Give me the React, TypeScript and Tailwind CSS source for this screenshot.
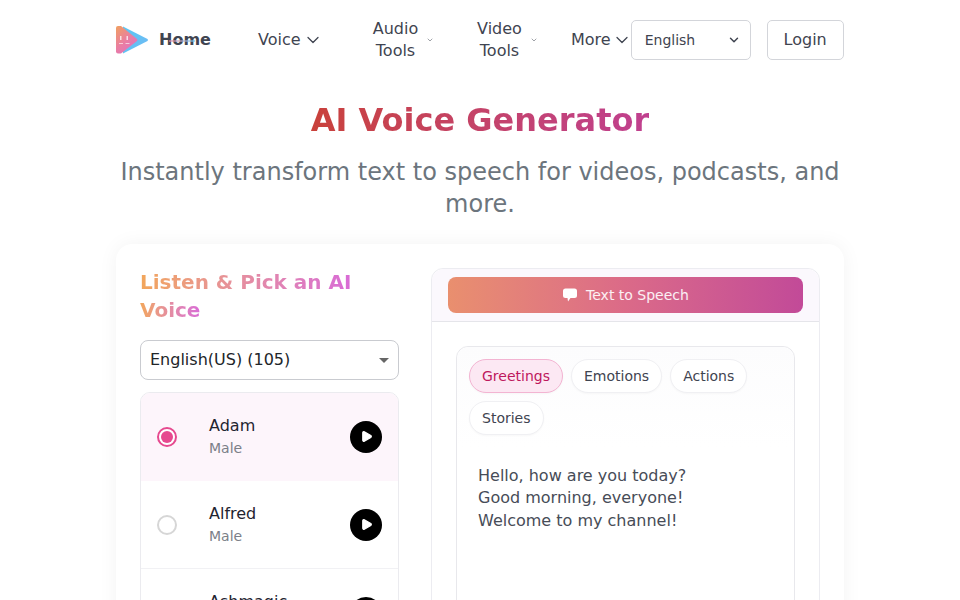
import React from 'react';
import { ChevronDown, Play } from 'lucide-react';

const voices = [
  { name: 'Adam', gender: 'Male', active: true },
  { name: 'Alfred', gender: 'Male', active: false },
  { name: 'Ashmagic', gender: 'Male', active: false },
];

const Logo = () => (
  <svg width="33" height="30" viewBox="0 0 33 30">
    <defs>
      <linearGradient id="logoFront" x1="0" y1="0" x2="0.7" y2="1">
        <stop offset="0" stopColor="#f0a060" />
        <stop offset="0.55" stopColor="#ea7fa0" />
        <stop offset="1" stopColor="#e070c0" />
      </linearGradient>
      <linearGradient id="logoBack" x1="0" y1="0" x2="1" y2="0.6">
        <stop offset="0" stopColor="#58c8f4" />
        <stop offset="1" stopColor="#6cbcf4" />
      </linearGradient>
    </defs>
    <path d="M7 1.500 L31.500 14 Q32.500 15 31.500 16 L7 28.500 Z" fill="url(#logoBack)" />
    <path d="M0 3 Q0 1 2 1 L5 1 L21 14 Q22 15 21 16 L5 28.500 L2 28.500 Q0 28.500 0 26.500 Z" fill="url(#logoFront)" />
    <rect x="4" y="11" width="1.500" height="4" fill="#fff" opacity="0.75" />
    <rect x="10.500" y="11" width="1.500" height="4" fill="#fff" opacity="0.75" />
    <rect x="3" y="18" width="4" height="1" fill="#fff" opacity="0.6" />
    <rect x="9.500" y="18" width="4" height="1" fill="#fff" opacity="0.6" />
  </svg>
);

const Nav = () => (
  <nav className="flex h-20 items-center">
    <a className="flex w-[142px] items-center gap-[10px]">
      <Logo />
      <span className="relative font-bold text-[#3f4450]">
        Home
        <span className="absolute left-[10px] top-[12px] h-[2px] w-[26px] bg-gradient-to-r from-[#e58aa0] to-[#6cc4ee] opacity-60" />
      </span>
    </a>
    <a className="flex w-[84px] items-center gap-[2px] text-[#3f4450]">
      Voice
      <ChevronDown className="h-5 w-5" strokeWidth={1.5} />
    </a>
    <a className="ml-[10px] flex w-[100px] items-center justify-center gap-[5px] text-center text-[#3f4450]">
      <span className="w-[50px] leading-[22.4px]">Audio Tools</span>
      <ChevronDown className="h-2 w-2" strokeWidth={1.5} />
    </a>
    <a className="ml-[4px] flex w-[100px] items-center justify-center gap-[5px] text-center text-[#3f4450]">
      <span className="w-[50px] leading-[22.4px]">Video Tools</span>
      <ChevronDown className="h-2 w-2" strokeWidth={1.5} />
    </a>
    <a className="ml-[15px] flex items-center gap-[1px] text-[#3f4450]">
      More
      <ChevronDown className="h-5 w-5" strokeWidth={1.5} />
    </a>
    <div className="ml-[-1px] flex h-10 w-[120px] items-center justify-between rounded-[5px] border border-[#d3d5da] pl-[13px] pr-[9px] text-sm text-[#3f4450]">
      English
      <ChevronDown className="h-[14px] w-[14px]" strokeWidth={2.5} />
    </div>
    <button className="ml-4 h-10 w-[77px] rounded-[5px] border border-[#d3d5da] text-[#3f4450]">Login</button>
  </nav>
);

const VoiceRow = ({ name, gender, active }: { name: string; gender: string; active: boolean }) => (
  <div className={`flex h-[88px] items-center border-b pl-4 pr-4 ${active ? 'border-transparent bg-[#fdf5fb]' : 'border-[#f1f1f4] bg-white'}`}>
    {active ? (
      <span className="flex h-5 w-5 items-center justify-center rounded-full border-2 border-[#e6498f] bg-white">
        <span className="h-3 w-3 rounded-full bg-[#e6498f]" />
      </span>
    ) : (
      <span className="h-5 w-5 rounded-full border-2 border-[#d6d6d6] bg-white" />
    )}
    <div className="ml-[32px] flex-1">
      <div className="text-base leading-[24px] text-[#1f2430]">{name}</div>
      <div className="text-sm leading-[21px] text-[#7b7f88]">{gender}</div>
    </div>
    <span className="flex h-8 w-8 items-center justify-center rounded-full bg-black">
      <Play className="ml-[1px] h-[13px] w-[13px] fill-white text-white" strokeWidth={2} />
    </span>
  </div>
);

const LeftColumn = () => (
  <div className="w-[259px] shrink-0">
    <h2 className="h-[56px] text-xl font-bold leading-[28px]">
      <span className="bg-gradient-to-r from-[#f2a65a] to-[#d96bd6] bg-clip-text text-transparent [-webkit-box-decoration-break:clone] [box-decoration-break:clone]">
        Listen &amp; Pick an AI Voice
      </span>
    </h2>
    <div className="mt-[16px] flex h-10 items-center justify-between rounded-lg border border-[#c9cbd0] bg-white pl-[9px] pr-[9px] text-base text-[#212529]">
      English(US) (105)
      <span className="h-0 w-0 border-x-[5px] border-t-[5px] border-x-transparent border-t-[#666]" />
    </div>
    <div className="mt-[12px] overflow-hidden rounded-[10px] border border-[#ebebef]">
      {voices.map((v) => (
        <VoiceRow key={v.name} {...v} />
      ))}
    </div>
  </div>
);

const Pill = ({ label, active }: { label: string; active?: boolean }) => (
  <span
    className={`flex h-[34px] items-center rounded-full border px-3 text-sm shadow-[0_1px_2px_rgba(0,0,0,0.03)] ${
      active ? 'border-[#f3b4d2] bg-[#fce8f3] text-[#be185d]' : 'border-[#f0f0f3] bg-white text-[#3f4450]'
    }`}
  >
    {label}
  </span>
);

const RightColumn = () => (
  <div className="h-[400px] w-[389px] shrink-0 rounded-xl border border-[#ececf1]">
    <div className="h-[53px] rounded-t-xl border-b border-[#e5e5ea] bg-[#fbf8fd] px-4 pt-2">
      <button className="flex h-9 w-full items-center justify-center gap-2 rounded-lg bg-gradient-to-r from-[#e98f6e] via-[#db6a88] to-[#c24a98] text-sm text-white/90">
        <svg width="16" height="16" viewBox="0 0 16 16" fill="#fff">
          <path d="M3.500 1.500h9A2.500 2.500 0 0 1 15 4v4.500A2.500 2.500 0 0 1 12.500 11H8.500L6 14.500 5.500 11h-2A2.500 2.500 0 0 1 1 8.500V4A2.500 2.500 0 0 1 3.500 1.500z" />
        </svg>
        Text to Speech
      </button>
    </div>
    <div className="px-6 pt-6">
      <div className="h-[320px] rounded-xl border border-[#e8e8ec]">
        <div className="flex flex-wrap gap-2 rounded-t-xl bg-gradient-to-b from-[#fcfcfd] to-white px-3 pb-3 pt-3">
          <Pill label="Greetings" active />
          <Pill label="Emotions" />
          <Pill label="Actions" />
          <Pill label="Stories" />
        </div>
        <div className="px-[21px] pt-[17.5px] text-base leading-[22.6px] text-[#474c57]">
          <p>Hello, how are you today?</p>
          <p>Good morning, everyone!</p>
          <p>Welcome to my channel!</p>
        </div>
      </div>
    </div>
  </div>
);

export default function App() {
  return (
    <div className="h-[600px] overflow-hidden bg-white font-['DejaVu_Sans',sans-serif]">
      <div className="mx-auto w-[728px]">
        <Nav />
        <h1 className="mt-[20px] text-center text-[32px] font-bold leading-[40px]">
          <span className="bg-gradient-to-r from-[#c9413a] to-[#c0408f] bg-clip-text text-transparent">AI Voice Generator</span>
        </h1>
        <p className="mt-[16px] text-center text-2xl leading-[32px] text-[#6c757d]">
          Instantly transform text to speech for videos, podcasts, and more.
        </p>
        <div className="mt-[24px] flex h-[500px] gap-[32px] rounded-2xl bg-white pl-6 pr-6 pt-6 shadow-[0_0_20px_rgba(0,0,0,0.05)]">
          <LeftColumn />
          <RightColumn />
        </div>
      </div>
    </div>
  );
}
